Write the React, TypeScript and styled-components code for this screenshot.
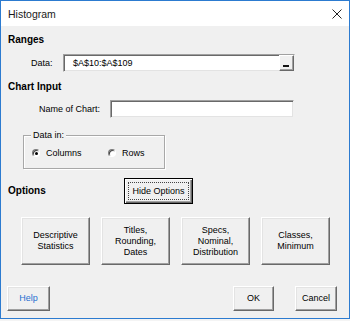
import styled, { createGlobalStyle } from 'styled-components';

const Global = createGlobalStyle`
  html, body {
    margin: 0;
    padding: 0;
    background: #f4f4f4;
  }
  body {
    font-family: "Liberation Sans", Arial, sans-serif;
    font-size: 9px;
    color: #000;
  }
`;

const Window = styled.div`
  box-sizing: border-box;
  width: 350px;
  height: 319px;
  border: 1px solid #2c7bd0;
  display: flex;
  flex-direction: column;
  background: #f0f0f0;
`;

const TitleBar = styled.div`
  height: 25px;
  flex: none;
  background: #fff;
  display: flex;
  align-items: center;
  justify-content: space-between;
  padding: 0 7px 0 7px;
`;

const Title = styled.span`
  font-size: 10.5px;
  color: #1a1a1a;
`;

const Body = styled.div`
  flex: 1;
  padding: 8px 0 0 0;
  display: flex;
  flex-direction: column;
`;

const Heading = styled.div<{ $top?: number }>`
  font-size: 10px;
  font-weight: bold;
  line-height: 12px;
  height: 12px;
  padding-left: 7px;
  margin-top: ${(p) => p.$top ?? 0}px;
`;

const SideHeading = styled.span`
  font-size: 10px;
  font-weight: bold;
  line-height: 12px;
  width: 116px;
  flex: none;
`;

const Row = styled.div<{ $top: number; $left: number; $h: number }>`
  display: flex;
  align-items: center;
  height: ${(p) => p.$h}px;
  margin-top: ${(p) => p.$top}px;
  padding-left: ${(p) => p.$left}px;
`;

const Label = styled.span<{ $w: number }>`
  width: ${(p) => p.$w}px;
  flex: none;
  line-height: 11px;
  white-space: nowrap;
`;

const Input = styled.div<{ $w: number }>`
  box-sizing: border-box;
  width: ${(p) => p.$w}px;
  height: 18px;
  background: #fff;
  border: 1px solid;
  border-color: #a0a0a0 #f0f0f0 #f0f0f0 #a0a0a0;
  box-shadow: inset 1px 1px #696969, inset -1px -1px #e3e3e3;
  display: flex;
  align-items: center;
  padding-left: 9px;
  line-height: 11px;
`;

const InputText = styled.span`
  flex: 1;
`;

const RefButton = styled.div`
  box-sizing: border-box;
  width: 15px;
  align-self: stretch;
  background: #f0f0f0;
  border: 1px solid;
  border-color: #fff #696969 #696969 #fff;
  box-shadow: inset -1px -1px #a0a0a0;
  position: relative;
  &::after {
    content: '';
    position: absolute;
    left: 3px;
    bottom: 3px;
    width: 6px;
    height: 2px;
    background: #111;
  }
`;

const Group = styled.div`
  position: relative;
  box-sizing: border-box;
  width: 142px;
  height: 34px;
  margin: 17px 0 0 22px;
  border: 1px solid #a8a8a8;
  box-shadow: inset 1px 1px #fff, 1px 1px #fff;
  display: flex;
  align-items: center;
  padding: 2px 0 0 8px;
`;

const Legend = styled.span`
  position: absolute;
  top: -6px;
  left: 7px;
  padding: 0 2px;
  background: #f0f0f0;
  line-height: 11px;
`;

const Radio = styled.label<{ $w?: number }>`
  display: flex;
  align-items: center;
  width: ${(p) => (p.$w ? `${p.$w}px` : 'auto')};
  line-height: 11px;
`;

const Dot = styled.span<{ $on?: boolean }>`
  box-sizing: border-box;
  width: 8px;
  height: 8px;
  margin-right: 6px;
  border-radius: 50%;
  background: #fff;
  border: 1px solid;
  border-color: #7a7a7a #fff #fff #7a7a7a;
  box-shadow: inset 1px 1px #404040;
  position: relative;
  &::after {
    content: '';
    display: ${(p) => (p.$on ? 'block' : 'none')};
    position: absolute;
    left: 1.5px;
    top: 1.5px;
    width: 3px;
    height: 3px;
    border-radius: 50%;
    background: #000;
  }
`;

const Button = styled.button<{ $w?: number; $h?: number; $link?: boolean }>`
  box-sizing: border-box;
  width: ${(p) => (p.$w ? `${p.$w}px` : '100%')};
  height: ${(p) => p.$h ?? 25}px;
  padding: 0;
  margin: 0;
  font-family: "Liberation Sans", Arial, sans-serif;
  font-size: 9px;
  line-height: 11px;
  color: ${(p) => (p.$link ? '#1f6fd0' : '#000')};
  background: #f0f0f0;
  border: 1px solid;
  border-color: #fff #696969 #696969 #fff;
  box-shadow: inset -1px -1px #a0a0a0, inset 1px 1px #e3e3e3;
  display: flex;
  align-items: center;
  justify-content: center;
  text-align: center;
`;

const DefaultButton = styled(Button)`
  border: 1px solid #000;
  box-shadow: inset 1px 1px #fff, inset -1px -1px #696969, inset -2px -2px #a0a0a0;
  position: relative;
  &::after {
    content: '';
    position: absolute;
    inset: 3px;
    border: 1px dotted #444;
  }
`;

const ButtonGrid = styled.div`
  display: grid;
  grid-template-columns: repeat(4, 69px);
  column-gap: 11px;
  margin: 13px 0 0 20px;
`;

const Footer = styled.div`
  display: flex;
  align-items: center;
  margin-top: 21px;
  padding: 0 12px 0 6px;
  gap: 21px;
`;

const Spacer = styled.div`
  flex: 1;
`;

const CloseIcon = () => (
  <svg width="10" height="10" viewBox="0 0 10 10">
    <path d="M0.5 0.5L9.5 9.5M9.5 0.5L0.5 9.5" stroke="#222" strokeWidth="1" fill="none" />
  </svg>
);

export default function App() {
  return (
    <>
      <Global />
      <Window>
        <TitleBar>
          <Title>Histogram</Title>
          <CloseIcon />
        </TitleBar>
        <Body>
          <Heading>Ranges</Heading>
          <Row $top={8} $left={30} $h={18}>
            <Label $w={32}>Data:</Label>
            <Input $w={232}>
              <InputText>$A$10:$A$109</InputText>
              <RefButton />
            </Input>
          </Row>
          <Heading $top={9}>Chart Input</Heading>
          <Row $top={7} $left={38} $h={18}>
            <Label $w={71}>Name of Chart:</Label>
            <Input $w={184} />
          </Row>
          <Group>
            <Legend>Data in:</Legend>
            <Radio $w={76}>
              <Dot $on />
              Columns
            </Radio>
            <Radio>
              <Dot />
              Rows
            </Radio>
          </Group>
          <Row $top={9} $left={7} $h={26}>
            <SideHeading>Options</SideHeading>
            <DefaultButton $w={69} $h={26}>
              Hide Options
            </DefaultButton>
          </Row>
          <ButtonGrid>
            <Button $h={48}>
              Descriptive
              <br />
              Statistics
            </Button>
            <Button $h={48}>
              Titles,
              <br />
              Rounding,
              <br />
              Dates
            </Button>
            <Button $h={48}>
              Specs,
              <br />
              Nominal,
              <br />
              Distribution
            </Button>
            <Button $h={48}>
              Classes,
              <br />
              Minimum
            </Button>
          </ButtonGrid>
          <Footer>
            <Button $w={43} $link>
              Help
            </Button>
            <Spacer />
            <Button $w={41}>OK</Button>
            <Button $w={42}>Cancel</Button>
          </Footer>
        </Body>
      </Window>
    </>
  );
}
